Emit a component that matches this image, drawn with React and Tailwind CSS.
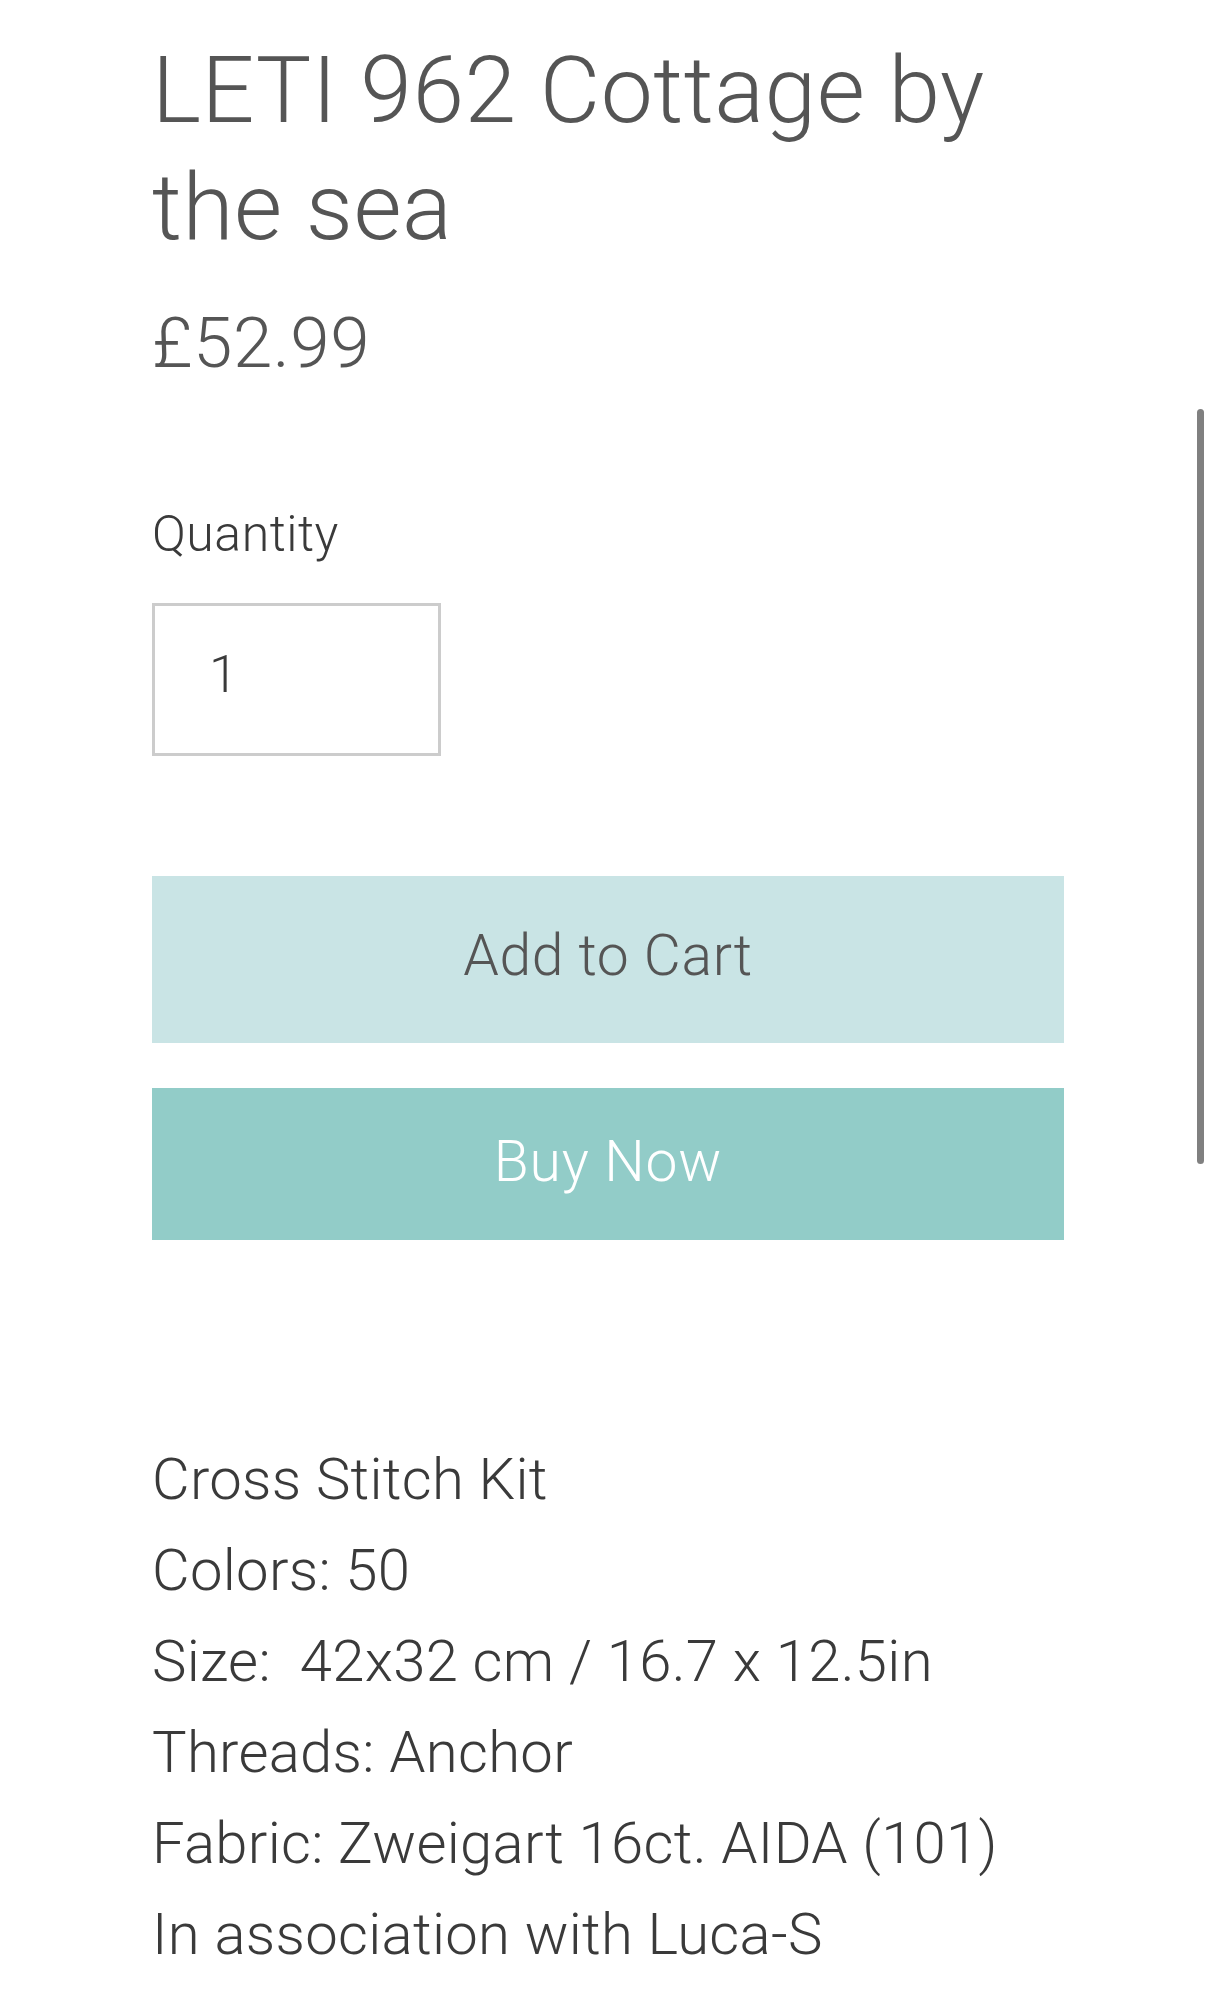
const App = () => {
  return (
    <div
      className="relative w-full min-h-[2000px] bg-white"
      style={{ fontFamily: 'Roboto, "Liberation Sans", sans-serif' }}
    >
      <div className="pl-[152px] pt-[32px] w-[1064px]">
        <h1 className="text-[93px] leading-[117px] font-light tracking-[0.5px] text-[#555555]">
          LETI 962 Cottage by the sea
        </h1>
        <p className="mt-[35px] text-[71px] leading-[84px] font-light tracking-[0.5px] text-[#555555]">
          £52.99
        </p>

        <p className="mt-[119px] text-[50px] leading-[60px] font-light tracking-[0.5px] text-[#3a3a3a]">
          Quantity
        </p>
        <div className="mt-[39px] w-[289px] h-[153px] border-[3px] border-[#cccccc] flex items-center pl-[54px] pb-[10px]">
          <span className="text-[52px] font-light text-[#3a3a3a]">1</span>
        </div>

        <button className="mt-[120px] w-[912px] h-[167px] bg-[#c9e4e5] flex items-center justify-center pb-[8px]">
          <span className="text-[57px] font-light tracking-[0.6px] text-[#555555]">Add to Cart</span>
        </button>
        <button className="mt-[45px] w-[912px] h-[152px] bg-[#92ccc8] flex items-center justify-center pb-[4px]">
          <span className="text-[57px] font-light tracking-[0.8px] text-white">Buy Now</span>
        </button>

        <div className="mt-[194px] text-[58px] leading-[91px] font-light tracking-[0.3px] text-[#3a3a3a]">
          <p>Cross Stitch Kit</p>
          <p>Colors: 50</p>
          <p>Size:&nbsp; 42x32 cm / 16.7 x 12.5in</p>
          <p>Threads: Anchor</p>
          <p>Fabric: Zweigart 16ct. AIDA (101)</p>
          <p>In association with Luca-S</p>
        </div>
      </div>

      {/* overlay scrollbar */}
      <div className="absolute left-[1197px] top-[409px] w-[7px] h-[755px] rounded-full bg-[#808080]" />
    </div>
  );
};

export default App;
